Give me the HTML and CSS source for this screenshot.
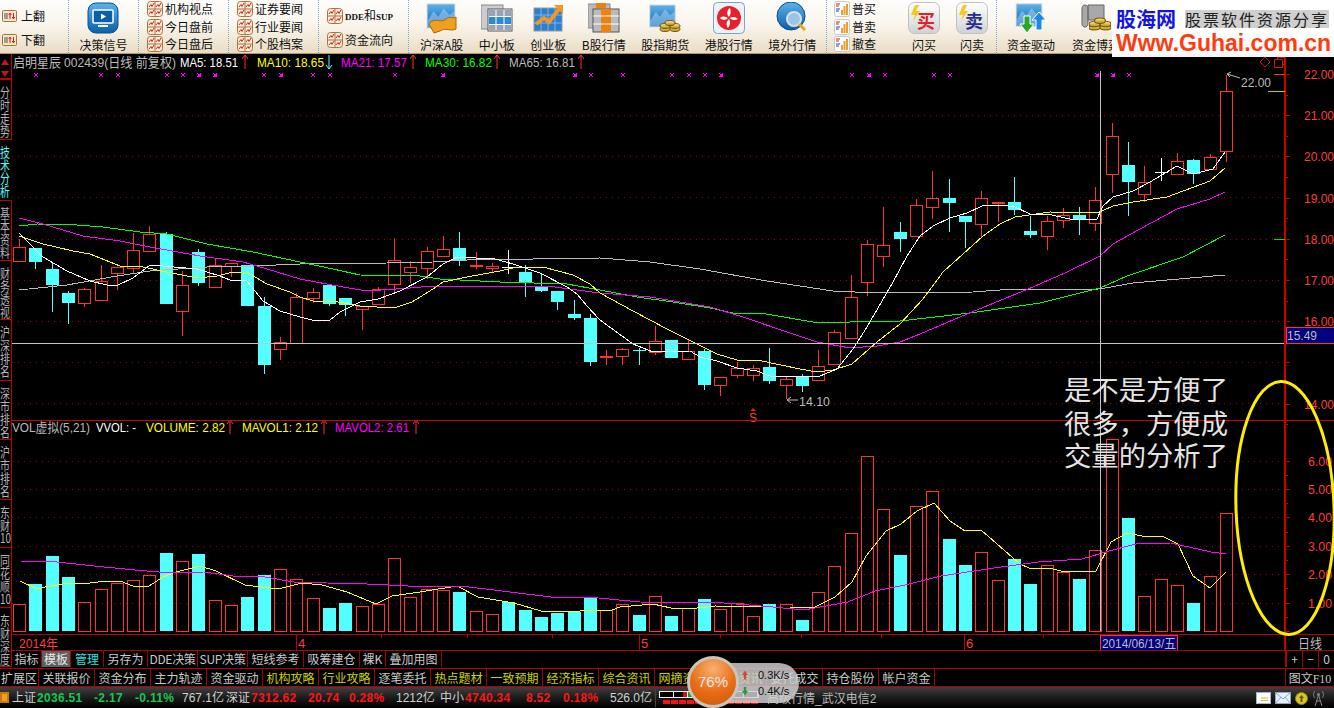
FILE: index.html
```html
<!DOCTYPE html>
<html lang="zh-CN">

<head>
  <meta charset="UTF-8">
  <title>启明星辰 002439 日线</title>
  <link rel="stylesheet" href="styles.css">
</head>

<body>

  <!-- 公用小图标 -->
  <svg class="defs" aria-hidden="true">
    <defs>
      <linearGradient id="g-blue" x1="0" y1="0" x2="0" y2="1">
        <stop offset="0" stop-color="#5db4ec" />
        <stop offset="1" stop-color="#0a5fa8" />
      </linearGradient>
      <linearGradient id="g-gold" x1="0" y1="0" x2="0" y2="1">
        <stop offset="0" stop-color="#fff2a0" />
        <stop offset="1" stop-color="#b88a10" />
      </linearGradient>
      <linearGradient id="g-tile" x1="0" y1="0" x2="0" y2="1">
        <stop offset="0" stop-color="#ffffff" />
        <stop offset="1" stop-color="#cfd2d4" />
      </linearGradient>
      <symbol id="ic-news" viewBox="0 0 16 16">
        <rect x=".5" y=".5" width="15" height="15" rx="3" fill="#f8efdc" stroke="#a8743c" />
        <path d="M8 1V15M1 8H15" stroke="#a8743c" fill="none" />
        <path d="M2 6L4 3.500L5 5.500L7 2M9 6L11 3.500L12 5.500L14 2M2 13L4 10.500L5 12.500L7 9M9 13L11 10.500L12 12.500L14 9"
          stroke="#e02020" fill="none" />
      </symbol>
      <symbol id="ic-flip" viewBox="0 0 15 12">
        <rect x=".5" y=".5" width="14" height="11" rx="1" fill="#f4e6c8" stroke="#a8743c" />
        <path d="M3 3V9M5 3V9" stroke="#555" />
        <path d="M8 9V3M6.800 5L8 3L9.200 5" stroke="#d02020" fill="none" />
        <path d="M11.500 3V9M10.300 7L11.500 9L12.700 7" stroke="#d02020" fill="none" />
      </symbol>
      <symbol id="ic-bars" viewBox="0 0 16 16">
        <rect x=".5" y=".5" width="15" height="15" rx="2" fill="#fff" stroke="#c8c8c8" />
        <path d="M2 3H6M2 5H5" stroke="#c02020" />
        <path d="M2 8H6M2 10H5" stroke="#2040b0" />
        <path d="M8 14V9M10.500 14V5M13 14V3" stroke="#e8a030" stroke-width="2" />
      </symbol>
      <symbol id="ic-chart" viewBox="0 0 32 28">
        <rect x="1" y="1" width="30" height="26" fill="url(#g-blue)" stroke="#d8d8d8" />
        <path d="M1 20L8 9L13 15L19 6L25 13L31 8V27H1Z" fill="#9cc8ee" opacity=".6" />
      </symbol>
      <symbol id="ic-coins" viewBox="0 0 20 14">
        <ellipse cx="5" cy="10" rx="5" ry="2.500" fill="url(#g-gold)" stroke="#7a5a08" />
        <ellipse cx="5" cy="7" rx="5" ry="2.500" fill="url(#g-gold)" stroke="#7a5a08" />
        <ellipse cx="15" cy="10" rx="5" ry="2.500" fill="url(#g-gold)" stroke="#7a5a08" />
        <ellipse cx="15" cy="7" rx="5" ry="2.500" fill="url(#g-gold)" stroke="#7a5a08" />
        <ellipse cx="10" cy="4" rx="5" ry="2.500" fill="url(#g-gold)" stroke="#7a5a08" />
      </symbol>
    </defs>
  </svg>

  <!-- 工具栏 -->
  <header class="toolbar">
    <div class="group rows-two flip">
      <a class="row"><svg class="ic-flip"><use href="#ic-flip" /></svg>上翻</a>
      <a class="row"><svg class="ic-flip"><use href="#ic-flip" /></svg>下翻</a>
    </div>

    <div class="group signal">
      <a class="tool">
        <svg class="big" viewBox="0 0 32 32">
          <rect x="1" y="1" width="30" height="30" rx="8" fill="url(#g-blue)" stroke="#0a4f90" />
          <rect x="6" y="8" width="20" height="13" rx="1" fill="#0a5fa8" stroke="#fff" stroke-width="1.500" />
          <path d="M14 11.500L19 14.500L14 17.500Z" fill="#fff" />
          <path d="M11 24H21" stroke="#fff" stroke-width="2" />
        </svg>
        决策信号
      </a>
    </div>

    <div class="group rows-three news">
      <a class="row"><svg class="ic-news"><use href="#ic-news" /></svg>机构视点</a>
      <a class="row"><svg class="ic-news"><use href="#ic-news" /></svg>今日盘前</a>
      <a class="row"><svg class="ic-news"><use href="#ic-news" /></svg>今日盘后</a>
    </div>

    <div class="group rows-three news">
      <a class="row"><svg class="ic-news"><use href="#ic-news" /></svg>证券要闻</a>
      <a class="row"><svg class="ic-news"><use href="#ic-news" /></svg>行业要闻</a>
      <a class="row"><svg class="ic-news"><use href="#ic-news" /></svg>个股档案</a>
    </div>

    <div class="group rows-two news">
      <a class="row"><svg class="ic-news"><use href="#ic-news" /></svg><span><span class="latin">DDE</span>和<span class="latin">SUP</span></span></a>
      <a class="row"><svg class="ic-news"><use href="#ic-news" /></svg>资金流向</a>
    </div>

    <div class="group markets">
      <a class="tool">
        <svg class="big" viewBox="0 0 32 32">
          <use href="#ic-chart" width="30" height="26" y="1" />
          <path d="M3 22C9 14 14 22 20 17C24 14 27 17 30 15V27C24 30 20 25 14 29L8 31Z" fill="#f0a020" stroke="#a86808" />
        </svg>
        沪深A股
      </a>
      <a class="tool">
        <svg class="big" viewBox="0 0 32 32">
          <rect x="0" y="3" width="22" height="24" fill="#ccc" stroke="#888" />
          <rect x="7" y="7" width="24" height="22" fill="#fff" stroke="#555" />
          <rect x="8" y="8" width="22" height="6" fill="#98a4b0" />
          <rect x="8" y="15" width="22" height="7" fill="#2c8ad8" />
          <rect x="8" y="23" width="22" height="5" fill="#98a4b0" />
          <path d="M15 8V28M23 8V28" stroke="#fff" />
        </svg>
        中小板
      </a>
      <a class="tool">
        <svg class="big" viewBox="0 0 32 32">
          <rect x="2" y="6" width="28" height="23" fill="#2c7ed0" stroke="#999" />
          <path d="M9 6V29M16 6V29M23 6V29M2 13H30M2 21H30" stroke="#7cb4e8" />
          <path d="M4 22L12 16L17 20L27 7" stroke="#f09820" stroke-width="4" fill="none" />
          <path d="M22 3H31V12Z" fill="#f09820" />
        </svg>
        创业板
      </a>
      <a class="tool">
        <svg class="big" viewBox="0 0 32 32">
          <rect x="0" y="2" width="22" height="24" fill="#bbb" stroke="#888" />
          <rect x="5" y="7" width="26" height="23" fill="#b8bcc0" stroke="#555" />
          <rect x="13" y="7" width="10" height="23" fill="#f08010" />
          <path d="M5 14H31M5 22H31" stroke="#fff" />
          <rect x="8" y="1" width="10" height="5" fill="#f08010" />
        </svg>
        B股行情
      </a>
      <a class="tool">
        <svg class="big" viewBox="0 0 32 32">
          <use href="#ic-chart" width="27" height="24" y="2" />
          <use href="#ic-coins" x="10" y="17" width="22" height="14" />
        </svg>
        股指期货
      </a>
      <a class="tool">
        <svg class="big" viewBox="0 0 32 32">
          <rect x=".5" y=".5" width="31" height="31" rx="4" fill="#eef2f6" stroke="#7aa4c8" />
          <circle cx="16" cy="16" r="12" fill="#e8202c" />
          <path
            d="M16 15C13 12 14 8 17 6C18 9 18 12 16 15ZM16.500 16C20 14 23 15 25 17C22 19 19 18 16.500 16ZM16 17C18 20 17 23 15 26C13 23 13 20 16 17ZM15 16C12 19 9 18 7 16C9 14 12 14 15 16Z"
            fill="#fff" />
        </svg>
        港股行情
      </a>
      <a class="tool">
        <svg class="big" viewBox="0 0 32 32">
          <circle cx="15" cy="14" r="14" fill="url(#g-blue)" stroke="#124a88" />
          <circle cx="18" cy="17" r="7" fill="#9cc4e4" stroke="#d8e0e8" stroke-width="2" />
          <path d="M23 22L29 28" stroke="#e0a820" stroke-width="3" />
        </svg>
        境外行情
      </a>
    </div>

    <div class="group trade">
      <div class="rows-three orders">
        <a class="row"><svg class="ic-news"><use href="#ic-bars" /></svg>普买</a>
        <a class="row"><svg class="ic-news"><use href="#ic-bars" /></svg>普卖</a>
        <a class="row"><svg class="ic-news"><use href="#ic-bars" /></svg>撤查</a>
      </div>
      <a class="tool flash">
        <svg class="big" viewBox="0 0 32 32">
          <rect x=".5" y=".5" width="31" height="31" rx="6" fill="url(#g-tile)" stroke="#c0c0c0" />
          <path d="M7 3L3 13H7L5 19L12 9H8L11 3Z" fill="#f8c820" />
          <text x="9" y="26" class="tile-text buy">买</text>
        </svg>
        闪买
      </a>
      <a class="tool flash">
        <svg class="big" viewBox="0 0 32 32">
          <rect x=".5" y=".5" width="31" height="31" rx="6" fill="url(#g-tile)" stroke="#c0c0c0" />
          <path d="M7 3L3 13H7L5 19L12 9H8L11 3Z" fill="#f8c820" />
          <text x="9" y="26" class="tile-text sell">卖</text>
        </svg>
        闪卖
      </a>
    </div>

    <div class="group funds">
      <a class="tool">
        <svg class="big" viewBox="0 0 32 32">
          <use href="#ic-chart" width="28" height="24" y="1" />
          <path d="M9 14H15V22H19L12 31L5 22H9Z" fill="#28a828" stroke="#fff" />
          <path d="M21 28V18H17L24 10L31 18H27V28Z" fill="#1c8ae0" stroke="#fff" />
        </svg>
        资金驱动
      </a>
      <a class="tool">
        <svg class="big" viewBox="0 0 32 32">
          <path d="M2 6C2 2 8 2 8 6V22C8 26 2 26 2 22ZM8 3H24V18H8Z" fill="#a8a8a8" stroke="#666" />
          <use href="#ic-coins" x="9" y="14" width="22" height="16" />
        </svg>
        资金博弈
      </a>
    </div>

    <div class="brand">
      <div class="brand-top">
        <span class="brand-name">股海网</span>
        <span class="brand-slogan">股票软件资源分享</span>
      </div>
      <div class="brand-url">Www.Guhai.com.cn</div>
    </div>
  </header>

  <div class="workspace">
    <!-- 左侧竖排标签 -->
    <nav class="side">
      <div class="side-arrows"><i class="tri-up"></i><i class="tri-down"></i></div>
      <a class="side-tab t60"><span>分<br>时<br>走<br>势</span></a>
      <a class="side-tab t61 active"><span>技<br>术<br>分<br>析</span></a>
      <a class="side-tab t60"><span>基<br>本<br>资<br>料</span></a>
      <a class="side-tab t59"><span>财<br>务<br>透<br>视</span></a>
      <a class="side-tab t61"><span>沪<br>深<br>排<br>名</span></a>
      <a class="side-tab t59"><span>深<br>市<br>排<br>名</span></a>
      <a class="side-tab t60"><span>沪<br>市<br>排<br>名</span></a>
      <a class="side-tab t48"><span>东<br>财<br>10</span></a>
      <a class="side-tab t60"><span>同<br>花<br>顺<br>10</span></a>
      <a class="side-tab t59"><span>东<br>财<br>深<br>度</span></a>
    </nav>

    <div class="content">
      <!-- K线、成交量和时间轴，由 chart.js 生成 -->
      <svg class="chart" id="chart" width="1322" height="597" viewBox="12 55 1322 597"></svg>

      <div class="tabs">
        <a class="tab w30">指标</a>
        <a class="tab w29 current">模板</a>
        <a class="tab w33 cyan">管理</a>
        <a class="tab w44">另存为</a>
        <a class="tab w50">DDE决策</a>
        <a class="tab w50">SUP决策</a>
        <a class="tab w56">短线参考</a>
        <a class="tab w56">吸筹建仓</a>
        <a class="tab w26">裸K</a>
        <a class="tab w56">叠加用图</a>
        <div class="zoom-btns">
          <a>+</a>
          <a>−</a>
          <a>0</a>
        </div>
      </div>
    </div>
  </div>

  <div class="extbar">
    <a class="ext first">扩展区</a>
    <a class="ext">关联报价</a>
    <a class="ext">资金分布</a>
    <a class="ext">主力轨迹</a>
    <a class="ext">资金驱动</a>
    <a class="ext yellow">机构攻略</a>
    <a class="ext yellow">行业攻略</a>
    <a class="ext">逐笔委托</a>
    <a class="ext yellow">热点题材</a>
    <a class="ext yellow">一致预期</a>
    <a class="ext yellow">经济指标</a>
    <a class="ext yellow">综合资讯</a>
    <a class="ext yellow">网摘资讯</a>
    <a class="ext yellow">行业资讯</a>
    <a class="ext">委托成交</a>
    <a class="ext">持仓股份</a>
    <a class="ext">帐户资金</a>
    <a class="ext last"><span>图文</span><span class="serif">F10</span></a>
  </div>

  <footer class="status">
    <i class="status-logo"></i>
    <div class="idx">
      <span>上证</span><b class="down">2036.51</b><b class="down">-2.17</b><b class="down">-0.11%</b><span>767.1亿</span>
    </div>
    <div class="idx">
      <span>深证</span><b class="up">7312.62</b><b class="up">20.74</b><b class="up">0.28%</b><span>1212亿</span>
    </div>
    <div class="idx idx-small">
      <span>中小</span><b class="up">4740.34</b><b class="up">8.52</b><b class="up">0.18%</b><span>526.0亿</span>
    </div>
    <div class="meter">
      <div class="meter-boxes"><i></i><i class="tick"></i><i class="tick-mid"></i><i></i><i></i><i></i><i></i></div>
      <div class="meter-dashes"><i></i><i></i><i></i><i></i><i></i><i></i><i></i><i></i><i></i><i></i><i></i><i></i></div>
    </div>
    <span class="server">高级行情_武汉电信2</span>
    <div class="tray">
      <svg width="15" height="12" viewBox="0 0 15 12">
        <rect x=".5" y=".5" width="14" height="11" fill="#fff" stroke="#9cb4d8" />
        <path d="M5 6H12M5 8.500H12" stroke="#d8b820" />
      </svg>
      <svg width="16" height="12" viewBox="0 0 16 12">
        <rect x=".5" y=".5" width="15" height="11" fill="#e8f0f8" stroke="#8ca4c8" />
        <path d="M1 1L8 7L15 1M1 11L6 5M15 11L10 5" stroke="#8ca4c8" fill="none" />
      </svg>
      <svg width="13" height="13" viewBox="0 0 13 13">
        <circle cx="6.500" cy="6.500" r="6" fill="#d8c820" stroke="#8a8010" />
        <path d="M6.500 3L9 6H4ZM5.500 6H7.500V10H5.500Z" fill="#605808" />
      </svg>
      <svg width="13" height="16" viewBox="0 0 13 16">
        <path d="M6.500 5L3 16M6.500 5L10 16M4.500 11H8.500" stroke="#888" fill="none" />
        <path d="M3 1C1 3 1 6 3 8M10 1C12 3 12 6 10 8" stroke="#888" fill="none" />
        <circle cx="6.500" cy="4.500" r="1.500" fill="#888" />
      </svg>
    </div>
  </footer>

  <!-- 悬浮网速球 -->
  <div class="speed">
    <div class="speed-pill">
      <div class="speed-row"><i class="arr-up"></i><span>0.3K/s</span></div>
      <div class="speed-row"><i class="arr-down"></i><span>0.4K/s</span></div>
    </div>
    <div class="speed-ball">76%</div>
  </div>

  <script src="chart.js"></script>
</body>

</html>
```

FILE: styles.css
```css
* {
  box-sizing: border-box;
}

body {
  margin: 0;
  width: 1334px;
  height: 708px;
  overflow: hidden;
  background: #000;
  color: #c8c8c8;
  font-family: "Liberation Sans", "Noto Sans CJK SC", sans-serif;
  font-size: 12px;
  position: relative;
}

a {
  color: inherit;
  text-decoration: none;
}

.defs {
  position: absolute;
  width: 0;
  height: 0;
}

.serif {
  font-family: "Liberation Serif", "Noto Sans CJK SC", serif;
  font-weight: bold;
}

.latin {
  font-family: "Liberation Serif", serif;
  font-size: 9px;
  font-weight: bold;
}

/* 工具栏 */
.toolbar {
  height: 54px;
  display: flex;
  position: relative;
  background: linear-gradient(#fefdfb, #faf6ee 45%, #e9dcc3);
  border-bottom: 1px solid #b09868;
  color: #111;
  font-family: "Noto Sans CJK SC", sans-serif;
  line-height: 16px;
}

.group {
  height: 53px;
  display: flex;
  border-right: 1px dotted #74a8dc;
  flex: none;
}

.flip {
  width: 69px;
  padding-left: 2px;
}

.signal {
  width: 70px;
  justify-content: center;
}

.news {
  width: 90px;
  padding-left: 8px;
}

.markets {
  width: 418px;
  gap: 15.5px;
  padding-left: 11px;
}

.trade {
  width: 170px;
  padding-left: 7px;
}

.funds {
  border-right: none;
  gap: 17px;
  padding-left: 10px;
}

.rows-two,
.rows-three {
  display: flex;
  flex-direction: column;
}

.rows-two {
  padding-top: 4px;
}

.row {
  display: flex;
  align-items: center;
  gap: 2px;
  white-space: nowrap;
}

.rows-two .row {
  height: 24px;
}

.rows-three .row {
  height: 18px;
}

.ic-news {
  width: 16px;
  height: 16px;
  flex: none;
}

.ic-flip {
  width: 15px;
  height: 12px;
  margin-right: 2px;
  flex: none;
}

.orders {
  width: 56px;
}

.tool {
  display: flex;
  flex-direction: column;
  align-items: center;
  white-space: nowrap;
  padding-top: 2px;
}

.big {
  width: 32px;
  height: 32px;
  margin-bottom: 3px;
  flex: none;
}

.flash {
  width: 48px;
}

.orders + .flash {
  margin-left: 10px;
}

.tile-text {
  font-family: "Noto Sans CJK SC", sans-serif;
  font-size: 18px;
  font-weight: bold;
}

.buy {
  fill: #e0202c;
}

.sell {
  fill: #28308c;
}

/* 右上角水印 */
.brand {
  position: absolute;
  top: 0;
  right: 0;
  width: 222px;
  height: 57px;
  padding: 7px 4px 0;
  background: rgba(255, 255, 255, 0.96);
  z-index: 2;
}

.brand-top {
  display: flex;
  align-items: center;
  height: 24px;
  gap: 9px;
}

.brand-name {
  color: #1414e0;
  font-size: 20px;
  font-weight: bold;
  line-height: 24px;
}

.brand-slogan {
  width: 144px;
  background: #cfcfcf;
  color: #222;
  font-size: 16px;
  line-height: 18px;
  letter-spacing: 2px;
  text-align: center;
  white-space: nowrap;
}

.brand-url {
  font-family: "Liberation Sans", sans-serif;
  font-size: 23px;
  font-weight: bold;
  line-height: 24px;
  color: #ff3c10;
  white-space: nowrap;
}

/* 主区域 */
.workspace {
  display: flex;
  height: 614px;
}

.side {
  width: 12px;
  flex: none;
  overflow: hidden;
  display: flex;
  flex-direction: column;
  font-family: "Noto Sans CJK SC", sans-serif;
  font-size: 13px;
  line-height: 13px;
  color: #b4b4b4;
}

.side-arrows {
  height: 26px;
  flex: none;
  border-right: 1px solid #c00000;
  border-bottom: 2px solid #c00000;
  padding: 5px 0 0 1px;
}

.side-arrows i {
  display: block;
  width: 0;
  border-left: 4.5px solid transparent;
  border-right: 4.5px solid transparent;
}

.tri-up {
  border-bottom: 6px solid #c81414;
  margin-bottom: 6px;
}

.tri-down {
  border-top: 6px solid #c81414;
}

.side-tab {
  display: block;
  flex: none;
  padding-top: 5px;
  white-space: nowrap;
  border-right: 1px solid #c00000;
  border-bottom: 1px solid #c00000;
}

.side-tab span {
  display: block;
  transform: scaleX(0.76);
  transform-origin: left;
}

.side-tab.active {
  color: #54ffff;
  border-right-color: transparent;
}

.t48 {
  height: 48px;
}

.t59 {
  height: 59px;
}

.t60 {
  height: 60px;
}

.t61 {
  height: 61px;
}

.content {
  width: 1322px;
  display: flex;
  flex-direction: column;
}

.chart {
  display: block;
  flex: none;
  overflow: visible;
}

.chart text {
  font-family: "Liberation Sans", "Noto Sans CJK SC", sans-serif;
  font-size: 13px;
}

.chart text.note {
  font-family: "Noto Sans CJK SC", sans-serif;
  font-size: 27px;
  fill: #e4e4e4;
}

.white {
  fill: #fff;
}

.yellow-t {
  fill: #ffff00;
}

.pink {
  fill: #ff00ff;
}

.green {
  fill: #00ff00;
}

.gray {
  fill: #bcbcbc;
}

.red {
  fill: #ff3c3c;
}

/* 指标标签行 */
.tabs {
  height: 17px;
  display: flex;
  border-top: 1px solid #b00000;
  font-family: "Noto Sans CJK SC", sans-serif;
  line-height: 16px;
  margin-top: -1px;
}

.tab {
  border-right: 1px solid #a00000;
  text-align: center;
  white-space: nowrap;
  flex: none;
}

.w26 {
  width: 26px;
}

.w29 {
  width: 29px;
}

.w30 {
  width: 30px;
}

.w33 {
  width: 33px;
}

.w44 {
  width: 44px;
}

.w50 {
  width: 50px;
  letter-spacing: -0.3px;
}

.w56 {
  width: 56px;
}

.tab.current {
  background: #606060;
  color: #e8e8e8;
}

.tab.cyan {
  color: #28e0e0;
}

.zoom-btns {
  margin-left: auto;
  display: flex;
  width: 49px;
  border-left: 2px solid #b00000;
}

.zoom-btns a {
  flex: 1;
  text-align: center;
  border-right: 1px solid #a00000;
}

.zoom-btns a:last-child {
  border-right: none;
}

/* 扩展区 */
.extbar {
  height: 19px;
  display: flex;
  border-top: 1px solid #b00000;
  border-bottom: 1px solid #b00000;
  font-family: "Noto Sans CJK SC", sans-serif;
  line-height: 17px;
}

.ext {
  width: 56px;
  text-align: center;
  border-right: 1px solid #a00000;
  white-space: nowrap;
  flex: none;
}

.ext.first {
  width: 39px;
}

.ext.yellow {
  color: #d0d000;
}

.ext.last {
  width: 49px;
  margin-left: auto;
  border-left: 1px solid #a00000;
  border-right: none;
}

.ext.last .serif {
  font-weight: normal;
}

/* 状态栏 */
.status {
  height: 21px;
  display: flex;
  align-items: center;
  background: linear-gradient(#404040, #181818 55%, #000);
  font-family: "Liberation Sans", "Noto Sans CJK SC", sans-serif;
  font-size: 12px;
  color: #d0d0d0;
  white-space: nowrap;
  position: relative;
}

.status-logo {
  width: 9px;
  height: 11px;
  margin-right: 3px;
  background: #f0a020;
  border: 2px solid #c87810;
  flex: none;
}

.idx {
  display: grid;
  grid-template-columns: 25px 57px 41px 47px 44px;
  align-items: center;
  line-height: 20px;
}

.idx b {
  letter-spacing: 0.3px;
}

.idx-small {
  grid-template-columns: 25px 61px 37px 47px 45px;
}

.down {
  color: #14c850;
}

.up {
  color: #ff1414;
}

.meter {
  width: 104px;
  height: 18px;
  margin-right: 8px;
  padding-left: 3px;
  border-left: 1px solid #444;
  flex: none;
}

.meter-boxes {
  display: flex;
  height: 7px;
  border: 1px solid #eee;
  margin-top: 2px;
}

.meter-boxes i {
  flex: 1;
  border-right: 1px solid #eee;
  background: #000;
}

.meter-boxes .tick {
  background: linear-gradient(90deg, #000 70%, #c81414 70%);
}

.meter-boxes .tick-mid {
  background: linear-gradient(90deg, #14a014 30%, #000 30%);
}

.meter-dashes {
  display: flex;
  gap: 1px;
  margin: 2px 0 0 4px;
}

.meter-dashes i {
  width: 7px;
  height: 4px;
  background: #f01414;
}

.server {
  color: #b8b8b8;
}

.tray {
  position: absolute;
  right: 9px;
  top: 3px;
  display: flex;
  align-items: center;
  gap: 4px;
}

/* 悬浮网速球 */
.speed {
  position: absolute;
  left: 687px;
  top: 656px;
  width: 112px;
  height: 52px;
}

.speed-pill {
  position: absolute;
  left: 28px;
  top: 7px;
  width: 84px;
  height: 40px;
  padding: 4px 0 0 27px;
  border-radius: 0 20px 20px 0;
  background: rgba(210, 210, 210, 0.82);
  color: #111;
  font-size: 11px;
  line-height: 16px;
}

.speed-row {
  display: flex;
  align-items: center;
  gap: 10px;
}

.speed-row i {
  width: 6px;
  height: 9px;
  flex: none;
}

.arr-up {
  background: #d84a30;
  clip-path: polygon(50% 0, 100% 50%, 70% 50%, 70% 100%, 30% 100%, 30% 50%, 0 50%);
}

.arr-down {
  background: #2a9a3a;
  clip-path: polygon(30% 0, 70% 0, 70% 50%, 100% 50%, 50% 100%, 0 50%, 30% 50%);
}

.speed-ball {
  position: absolute;
  left: 0;
  top: 0;
  width: 52px;
  height: 52px;
  border-radius: 50%;
  border: 3px solid #c8c4c0;
  background: radial-gradient(circle at 50% 22%, #f8b070, #e86c14 55%, #c85808);
  color: #e8e8e8;
  font-size: 15px;
  line-height: 46px;
  text-align: center;
}
```

FILE: chart.js
```js
// 每根K线：类型, 实体上沿, 实体下沿, 上影线, 下影线（页面像素坐标）
// r 红空心  c 青实心  f 红十字星  w 白十字星  x 青十字星
const candles = [
  ["r", 248, 262, 240, 262], ["c", 249, 263, 249, 270], ["c", 270, 286, 263, 313], ["c", 294, 304, 292, 325],
  ["r", 290, 304, 289, 308], ["r", 282, 301, 266, 301], ["r", 268, 274, 268, 291], ["r", 251, 269, 234, 275],
  ["r", 235, 252, 227, 252], ["c", 235, 305, 233, 305], ["r", 286, 312, 272, 337], ["c", 253, 284, 250, 287],
  ["r", 266, 288, 260, 288], ["r", 264, 267, 264, 278], ["c", 266, 307, 266, 307], ["c", 307, 366, 298, 375],
  ["r", 343, 350, 338, 361], ["r", 298, 344, 294, 344], ["r", 293, 299, 289, 304], ["c", 286, 305, 286, 307],
  ["c", 299, 306, 299, 317], ["r", 307, 310, 307, 331], ["r", 290, 305, 288, 305], ["r", 261, 285, 239, 294],
  ["r", 268, 273, 262, 284], ["r", 252, 269, 248, 280], ["r", 250, 257, 237, 257], ["c", 249, 261, 233, 267],
  ["f", 266, 268, 253, 270], ["r", 267, 269, 264, 273], ["w", 268, 268, 251, 275], ["c", 273, 284, 266, 298],
  ["c", 287, 292, 275, 293], ["c", 292, 303, 292, 311], ["c", 315, 319, 301, 321], ["c", 319, 363, 315, 367],
  ["f", 357, 359, 351, 366], ["r", 350, 357, 349, 366], ["x", 351, 351, 349, 366], ["r", 342, 353, 327, 356],
  ["c", 341, 359, 341, 359], ["r", 352, 360, 341, 360], ["c", 352, 386, 350, 391], ["r", 378, 386, 378, 397],
  ["r", 369, 376, 363, 379], ["r", 369, 376, 366, 382], ["c", 368, 382, 349, 385], ["r", 380, 386, 378, 400],
  ["c", 377, 387, 375, 393], ["r", 367, 381, 351, 381], ["r", 333, 365, 331, 365], ["r", 298, 339, 276, 339],
  ["r", 245, 283, 241, 297], ["r", 246, 257, 208, 268], ["c", 233, 240, 223, 253], ["r", 206, 237, 200, 237],
  ["r", 199, 208, 172, 220], ["c", 199, 204, 180, 233], ["c", 217, 223, 217, 249], ["r", 199, 225, 192, 239],
  ["f", 203, 205, 203, 223], ["c", 203, 211, 178, 216], ["c", 232, 236, 217, 239], ["r", 222, 237, 217, 251],
  ["r", 216, 221, 209, 229], ["c", 216, 220, 208, 236], ["r", 201, 224, 188, 232], ["r", 137, 175, 124, 194],
  ["c", 166, 183, 143, 217], ["r", 183, 195, 167, 203], ["w", 173, 173, 159, 182], ["r", 162, 175, 154, 175],
  ["c", 161, 175, 160, 185], ["r", 158, 170, 155, 170], ["r", 92, 152, 76, 163]
];

// 成交量柱：r 红空心, c 青实心, 顶部 y
const volumes = [
  ["r", 605], ["c", 585], ["c", 557], ["c", 578], ["r", 603], ["r", 590], ["r", 584], ["r", 581], ["r", 576], ["c", 554],
  ["r", 562], ["c", 555], ["r", 601], ["r", 606], ["c", 598], ["c", 576], ["r", 570], ["r", 580], ["r", 599], ["c", 609],
  ["c", 604], ["r", 607], ["r", 605], ["r", 559], ["r", 598], ["r", 590], ["r", 591], ["c", 593], ["r", 612], ["r", 615],
  ["c", 603], ["c", 611], ["c", 618], ["c", 614], ["c", 613], ["c", 599], ["r", 611], ["r", 605], ["c", 616], ["r", 597],
  ["c", 617], ["r", 609], ["c", 600], ["r", 610], ["r", 604], ["r", 617], ["c", 605], ["r", 605], ["c", 621], ["r", 593],
  ["r", 567], ["r", 534], ["r", 457], ["r", 510], ["c", 556], ["r", 507], ["r", 492], ["c", 540], ["c", 566], ["r", 553],
  ["r", 581], ["c", 560], ["c", 585], ["r", 566], ["r", 573], ["c", 580], ["r", 551], ["r", 440], ["c", 519], ["r", 597],
  ["r", 580], ["r", 586], ["c", 604], ["r", 577], ["r", 514]
];

const lines = {
  ma65: ["#bcbcbc", "19,291 67,286 117,277 150,272 207,268 253,267 300,265 387,264 433,263 467,261 600,259 650,263 700,270 767,282 833,292 877,294 973,293 1000,291 1100,290 1133,284 1225,276"],
  ma30: ["#00ff00", "19,227 37,225 77,226 103,228 140,233 167,235 207,245 253,253 300,263 333,270 360,276 420,277 440,280 500,283 567,285 600,291 637,298 673,303 710,309 733,314 760,314 813,323 840,324 860,322 900,322 970,314 1040,304 1100,289 1127,277 1183,258 1225,236"],
  ma21: ["#ff00ff", "19,219 43,225 83,237 120,242 150,248 200,257 243,263 267,270 300,280 343,288 367,292 410,289 433,287 480,287 493,288 503,287 547,287 577,291 600,294 650,298 710,308 743,318 787,333 817,343 850,349 877,347 900,343 920,335 967,315 1033,288 1067,273 1100,257 1113,245 1140,230 1177,210 1210,200 1225,193"],
  ma10: ["#ffff00", "19,237 43,245 73,252 90,255 120,267 143,268 167,273 197,279 217,277 233,273 250,275 267,285 290,293 300,298 313,302 333,302 360,307 377,308 397,308 412,303 433,290 443,283 467,278 500,272 517,268 543,268 573,276 590,285 600,294 633,312 667,330 697,345 717,355 737,361 757,361 800,370 817,373 833,371 852,365 877,343 900,325 923,300 943,273 983,237 1000,225 1015,218 1050,213 1097,214 1113,207 1133,203 1167,198 1210,182 1225,169"],
  ma5: ["#ffffff", "19,234 33,248 43,258 67,272 90,282 107,286 118,286 133,279 150,266 163,267 197,270 220,277 230,281 247,282 263,302 280,312 300,318 312,321 330,321 340,313 360,303 378,300 400,292 427,278 443,265 457,258 495,260 513,265 540,274 567,288 577,295 587,307 600,321 633,345 653,353 690,352 700,358 717,362 737,369 757,372 770,377 820,377 837,370 853,350 867,328 893,283 907,257 920,237 933,227 950,219 967,214 982,207 1000,206 1015,208 1030,215 1047,215 1070,220 1097,220 1103,207 1113,198 1133,192 1150,183 1177,167 1193,175 1213,170 1225,153"],
  vol1: ["#ffff00", "20,582 37,590 45,588 69,584 90,584 106,582 120,582 133,587 149,587 163,578 176,573 200,567 216,572 245,586 261,588 278,590 302,584 322,586 347,593 376,605 392,597 420,593 457,587 478,598 514,604 541,612 580,612 612,611 620,608 653,605 671,609 697,609 715,607 764,608 790,608 813,609 835,598 852,583 866,557 886,532 901,525 917,512 934,504 950,522 965,532 981,531 1020,565 1029,569 1049,569 1065,573 1096,572 1111,543 1127,534 1142,537 1162,537 1178,545 1193,577 1210,589 1226,573"],
  vol2: ["#ff00ff", "20,562 57,563 94,567 135,571 171,574 204,573 233,577 265,578 294,583 327,584 367,585 408,587 461,587 510,593 551,598 588,598 640,603 724,604 773,608 804,611 848,603 875,592 905,586 941,577 994,569 1038,563 1082,560 1109,552 1136,545 1171,544 1211,553 1226,555"]
};

// 顶部的买卖标记：[x, 是否带实心方块]
const marks = [
  [36, 0], [101, 0], [118, 0], [167, 0], [183, 0], [199, 1], [215, 1], [264, 0], [281, 1], [313, 0], [330, 0], [395, 0],
  [443, 1], [591, 0], [575, 1], [623, 0], [672, 0], [689, 0], [705, 0], [721, 1], [852, 0], [869, 1], [885, 0], [934, 0],
  [950, 0], [1097, 1], [1113, 1], [1129, 0]
];

const RED = "#ff3232";
const CYAN = "#54ffff";
const GRID = "#a00000";
const RULE = "#c00000";
const LEFT = 12;
const AXIS = 1285;

let out = "";

function line(x1, y1, x2, y2, color, extra) {
  out += `<line x1="${x1}" y1="${y1}" x2="${x2}" y2="${y2}" stroke="${color}" shape-rendering="crispEdges" ${extra || ""}/>`;
}

function rect(x, y, w, h, fill, stroke) {
  out += `<rect x="${x}" y="${y}" width="${w}" height="${h}" fill="${fill}" stroke="${stroke || "none"}" shape-rendering="crispEdges"/>`;
}

function label(x, y, text, cls, width, anchor) {
  const fit = width ? `textLength="${width}" lengthAdjust="spacingAndGlyphs"` : "";
  out += `<text x="${x}" y="${y}" class="${cls}" ${fit} text-anchor="${anchor || "start"}">${text}</text>`;
}

function arrow(x, y, color, up) {
  const tip = up ? y - 7 : y + 7;
  const back = up ? tip + 4 : tip - 4;
  const tail = up ? y + 7 : y - 7;
  out += `<path d="M${x} ${tail}V${tip}M${x - 3} ${back}L${x} ${tip}L${x + 3} ${back}" stroke="${color}" fill="none"/>`;
}

function barX(i) {
  return Math.round(13 + 16.31 * i);
}

// 网格
for (let k = 0; k < 8; k++) {
  const y = Math.round(116 + 41.2 * k) + 0.5;
  line(LEFT, y, AXIS, y, GRID, 'stroke-dasharray="1 5"');
}
for (let k = 0; k < 6; k++) {
  const y = Math.round(461.5 + 28.4 * k) + 0.5;
  line(LEFT, y, AXIS, y, GRID, 'stroke-dasharray="1 5"');
}

// 成交量柱
volumes.forEach(function (v, i) {
  const x = barX(i);
  if (v[0] === "c") {
    rect(x, v[1], 13, 632 - v[1], CYAN);
  } else {
    rect(x + 0.5, v[1] + 0.5, 12, 632 - v[1], "none", RED);
  }
});

// K线
candles.forEach(function (c, i) {
  const x = barX(i);
  const mid = x + 6.5;
  const type = c[0];
  if (type === "w" || type === "x") {
    const color = type === "w" ? "#ffffff" : CYAN;
    line(mid, c[3], mid, c[4], color);
    line(x, c[1] + 0.5, x + 13, c[1] + 0.5, color);
    return;
  }
  const color = type === "c" ? CYAN : RED;
  line(mid, c[3], mid, c[4], color);
  if (type === "c") {
    rect(x, c[1], 13, c[2] - c[1], CYAN);
  } else if (type === "f") {
    rect(x, c[1], 13, c[2] - c[1], RED);
  } else {
    rect(x + 0.5, c[1] + 0.5, 12, c[2] - c[1], "#000", RED);
  }
});

// 均线
Object.keys(lines).forEach(function (name) {
  out += `<polyline points="${lines[name][1]}" fill="none" stroke="${lines[name][0]}" shape-rendering="crispEdges"/>`;
});

// 十字光标
line(LEFT, 344.5, AXIS, 344.5, "#c4c4c4");
line(1100.5, 72, 1100.5, 632, "#c4c4c4");

// 标记
marks.forEach(function (m) {
  const x = m[0];
  out += `<path d="M${x - 2} 74L${x + 2} 78M${x + 2} 74L${x - 2} 78" stroke="#ff00ff" fill="none"/>`;
  if (m[1]) {
    rect(x - 1.5, 74.5, 3, 3, "#ff00ff");
  }
});

// 主图图例
label(13, 68, "启明星辰", "gray", 48);
label(64, 68, "002439(日线 前复权)", "gray", 112);
label(180, 68, "MA5: 18.51", "white", 58);
arrow(245, 63, RED, true);
label(257, 68, "MA10: 18.65", "yellow-t", 67);
arrow(329, 63, CYAN, false);
label(341, 68, "MA21: 17.57", "pink", 66);
arrow(413, 63, RED, true);
label(425, 68, "MA30: 16.82", "green", 67);
arrow(497, 63, RED, true);
label(509, 68, "MA65: 16.81", "gray", 66);
arrow(581, 63, RED, true);

// 副图图例
label(12, 433, "VOL虚拟(5,21)", "gray", 78);
label(96, 433, "VVOL: -", "white", 40);
label(146, 433, "VOLUME: 2.82", "yellow-t", 79);
arrow(230, 428, RED, true);
label(242, 433, "MAVOL1: 2.12", "yellow-t", 76);
arrow(324, 428, RED, true);
label(335, 433, "MAVOL2: 2.61", "pink", 74);
arrow(416, 428, RED, true);

// 高低点标注
out += '<path d="M1227 75L1240 79M1227 75L1231 73M1227 75L1230 78" stroke="#bcbcbc" fill="none"/>';
label(1241, 88, "22.00", "gray", 30);
out += '<path d="M787 401H798M787 401L791 398M787 401L791 404" stroke="#bcbcbc" fill="none"/>';
label(799, 407, "14.10", "gray", 31);
out += `<path d="M753 409L756 412H750Z" fill="#f01414"/>`;
label(749, 423, "S", "red", 8);

// 主副图分隔、坐标轴
line(LEFT, 421.5, 1334, 421.5, "#d00000");
line(LEFT, 635.5, 1334, 635.5, "#b00000");
line(AXIS, 55, AXIS, 652, "#c80000", 'stroke-width="2"');

for (let k = 0; k < 18; k++) {
  const y = Math.round(75 + 20.6 * k) + 0.5;
  line(AXIS, y, AXIS + (k % 2 ? 3 : 5), y, RULE);
}
for (let k = 0; k < 13; k++) {
  const y = Math.round(461.5 + 14.2 * k) + 0.5;
  line(AXIS, y, AXIS + (k % 2 ? 3 : 5), y, RULE);
}
["22.00", "21.00", "20.00", "19.00", "18.00", "17.00", "16.00", "15.00", "14.00"].forEach(function (t, k) {
  if (t !== "15.00") {
    label(1304, Math.round(75 + 41.2 * k) + 5, t, "red", 30);
  }
});
["6.00", "5.00", "4.00", "3.00", "2.00", "1.00"].forEach(function (t, k) {
  label(1308, Math.round(461.5 + 28.4 * k) + 5, t, "red", 24);
});

// 轴上的现价短线
line(1274, 75.5, AXIS, 75.5, RED);
line(1268, 92.5, AXIS, 92.5, "#c8c800");
line(1274, 240.5, AXIS, 240.5, "#00e000");

// 右上角小按钮
out += '<path d="M1265 58L1270 63L1265 68L1260 63Z" fill="none" stroke="#d01414"/>';
out += '<path d="M1274.500 60.500H1282.500V68.500H1274.500ZM1277.500 60.500V58.500H1284.500V65.500H1282.500" fill="none" stroke="#d01414"/>';

// 现价框
rect(1286, 328.5, 48, 15.5, "#000080", RED);
label(1287, 341, "15.49", "gray", 30);

// 叠加说明文字
label(1064, 401, "是不是方便了", "note", 164);
label(1064, 435, "很多，方便成", "note", 164);
label(1064, 467, "交量的分析了", "note", 164);

// 黄色手绘圈
out += '<ellipse cx="1285" cy="509" rx="49" ry="126.500" fill="none" stroke="#ffee00" stroke-width="3" transform="rotate(-2 1285 509)"/>';

// 时间轴
label(19, 649, "2014年", "red", 39);
[296, 639, 964].forEach(function (x) {
  line(x + 0.5, 636, x + 0.5, 652, RULE);
});
label(298, 649, "4", "red");
label(641, 649, "5", "red");
label(966, 649, "6", "red");
[381, 467, 552, 720, 801, 881, 1043].forEach(function (x) {
  line(x + 0.5, 636, x + 0.5, 639, RULE);
});
rect(1100.5, 636, 77, 15.5, "#000080", RED);
label(1102, 649, "2014/06/13/五", "gray", 74);
label(1298, 649, "日线", "gray", 24);

document.getElementById("chart").innerHTML = out;
```
